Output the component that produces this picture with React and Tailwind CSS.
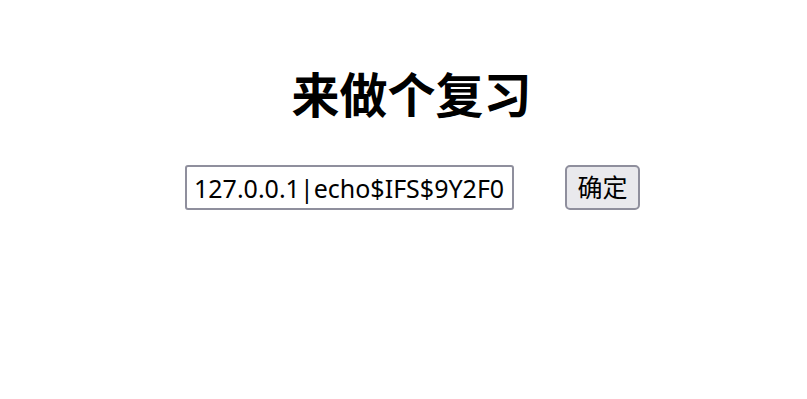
import React from 'react';

const App = () => {
    return (
        <div className="min-h-[399px] bg-white text-black pl-4 pt-[61px] font-['Noto_Sans','Noto_Sans_CJK_SC',sans-serif]">
            <h1 className="text-center text-[48px] leading-[68px] font-bold">来做个复习</h1>
            <div className="mt-[36px] flex justify-center items-center pl-[2px]">
                <input
                    type="text"
                    readOnly
                    defaultValue="127.0.0.1|echo$IFS$9Y2F0dCAvZmxhZy5waHA="
                    className="w-[329px] h-[45px] pl-[7px] pr-[8px] text-[25px] border-2 border-[#8f8f9d] rounded-[3px] outline-none bg-white"
                />
                <button className="ml-[51px] w-[75px] h-[45px] text-[25px] bg-[#e9e9ed] border-2 border-[#8f8f9d] rounded-[5px]">
                    确定
                </button>
            </div>
        </div>
    );
};

export default App;
